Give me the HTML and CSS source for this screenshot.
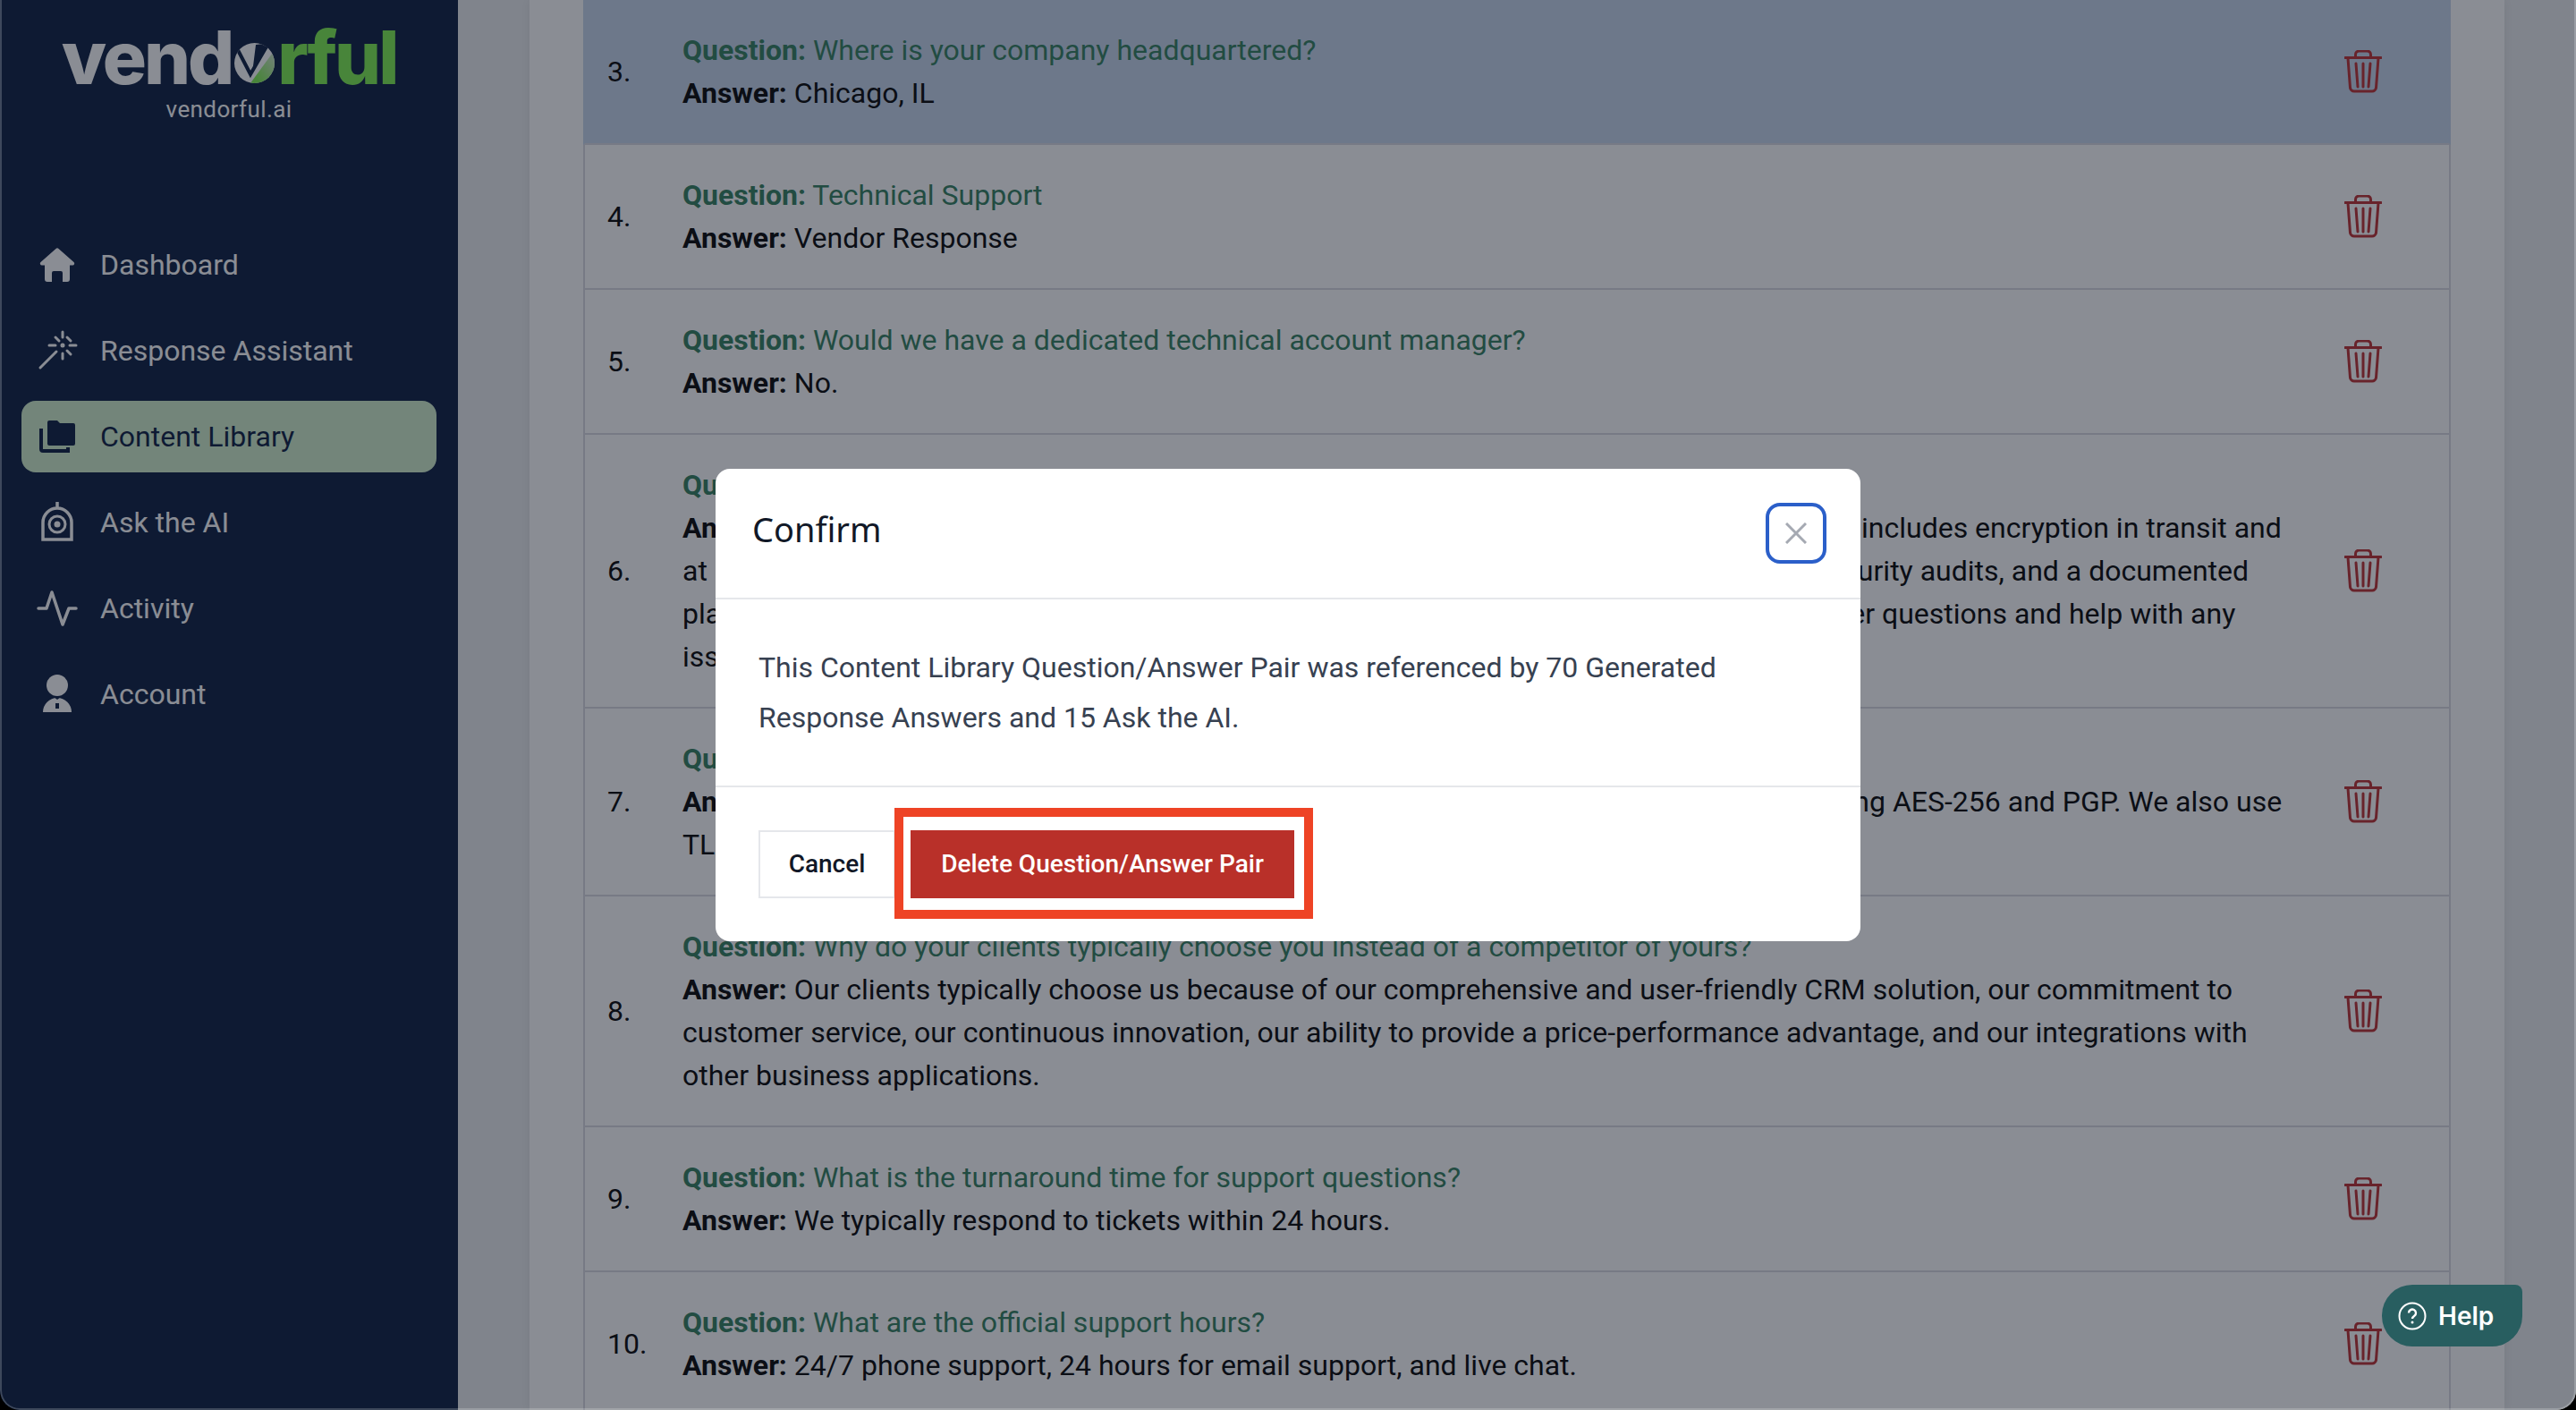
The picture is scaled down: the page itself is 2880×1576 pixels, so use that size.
FILE: index.html
```html
<!DOCTYPE html>
<html lang="en">
<head>
    <meta charset="UTF-8">
    <title>Content Library</title>
    <link rel="stylesheet" href="styles.css">
</head>
<body>
    <div class="window">
        <aside class="sidebar">
            <div class="brand">
                <div class="logo">
                    <span class="logo-grey">vend</span>
                    <svg class="logo-o" viewBox="0 0 45 45">
                        <defs>
                            <linearGradient id="logoFade" x1="0" y1="1" x2="1" y2="0">
                                <stop offset="0.2" stop-color="#7bef4b"/>
                                <stop offset="1" stop-color="#d8e4d4"/>
                            </linearGradient>
                            <clipPath id="logoCircle"><circle cx="22.5" cy="22.5" r="22.5"/></clipPath>
                        </defs>
                        <g clip-path="url(#logoCircle)">
                            <rect width="45" height="45" fill="#fff"/>
                            <polygon points="18,45 45,8 45,45" fill="url(#logoFade)"/>
                            <polyline points="4,8 18,35 36,4" fill="none" stroke="#07193d" stroke-width="4"/>
                            <polygon points="20,34 24,2 40,0" fill="#07193d"/>
                        </g>
                    </svg>
                    <span class="logo-green">rful</span>
                </div>
                <div class="brand-url">vendorful.ai</div>
            </div>
            <nav class="nav">
                <a class="nav-item">
                    <svg class="nav-icon" viewBox="0 0 48 48" fill="currentColor"><path d="M22.5 6a2 2 0 0 1 3 0L42.5 21a2 2 0 0 1-1.5 3.5H38V40a3 3 0 0 1-3 3h-5V33a2 2 0 0 0-2-2h-8a2 2 0 0 0-2 2v10h-5a3 3 0 0 1-3-3V24.5H7a2 2 0 0 1-1.5-3.5Z"/></svg>
                    Dashboard
                </a>
                <a class="nav-item">
                    <svg class="nav-icon" viewBox="0 0 48 48" fill="none" stroke="currentColor" stroke-width="3" stroke-linecap="round"><path d="M5 43 23 25"/><path d="M30 3v6M30 27v6M15 18h7M38 18h7M35 9l4 4M35 24l4 4M22 9l4 4"/><circle cx="30" cy="18" r="1" fill="currentColor"/></svg>
                    Response Assistant
                </a>
                <a class="nav-item active">
                    <svg class="nav-icon" viewBox="0 0 48 48" fill="currentColor"><path d="M15 6h9l3 3h15a2 2 0 0 1 2 2v21a2 2 0 0 1-2 2H15a2 2 0 0 1-2-2V8a2 2 0 0 1 2-2Z"/><path d="M6 15V38a2 2 0 0 0 2 2H36V36" fill="none" stroke="currentColor" stroke-width="4"/></svg>
                    Content Library
                </a>
                <a class="nav-item">
                    <svg class="nav-icon" viewBox="0 0 48 48" fill="none" stroke="currentColor" stroke-width="3.5"><path d="M24 1v7M8 43V24a16 16 0 0 1 32 0V43Z"/><circle cx="24" cy="26" r="9" stroke-width="3"/><circle cx="24" cy="26" r="3.5" fill="currentColor" stroke="none"/></svg>
                    Ask the AI
                </a>
                <a class="nav-item">
                    <svg class="nav-icon" viewBox="0 0 48 48" fill="none" stroke="currentColor" stroke-width="3.5" stroke-linecap="round" stroke-linejoin="round"><path d="M3 24h9l6-18 12 36 7-18h8"/></svg>
                    Activity
                </a>
                <a class="nav-item">
                    <svg class="nav-icon" viewBox="0 0 48 48" fill="currentColor"><circle cx="24" cy="14" r="12"/><path d="M8 44a16 16 0 0 1 32 0Z"/><path d="M22 34h4v6h-4zM20 27h8l-4 3Z" fill="#07193d"/></svg>
                    Account
                </a>
            </nav>
        </aside>

        <main class="main">
            <section class="card">
                <div class="qa-row selected">
                    <span class="qa-num">3.</span>
                    <div class="qa-text">
                        <p class="question"><b>Question:</b> Where is your company headquartered?</p>
                        <p><b>Answer:</b> Chicago, IL</p>
                    </div>
                    <svg class="trash" viewBox="0 0 42 48"><use href="#trashIcon"/></svg>
                </div>
                <div class="qa-row">
                    <span class="qa-num">4.</span>
                    <div class="qa-text">
                        <p class="question"><b>Question:</b> Technical Support</p>
                        <p><b>Answer:</b> Vendor Response</p>
                    </div>
                    <svg class="trash" viewBox="0 0 42 48"><use href="#trashIcon"/></svg>
                </div>
                <div class="qa-row">
                    <span class="qa-num">5.</span>
                    <div class="qa-text">
                        <p class="question"><b>Question:</b> Would we have a dedicated technical account manager?</p>
                        <p><b>Answer:</b> No.</p>
                    </div>
                    <svg class="trash" viewBox="0 0 42 48"><use href="#trashIcon"/></svg>
                </div>
                <div class="qa-row">
                    <span class="qa-num">6.</span>
                    <div class="qa-text">
                        <p class="question"><b>Question:</b> What security measures do you have in place to protect our data?</p>
                        <p><b>Answer:</b> Yes, we take the security of our customer data most seriously. Our security program includes encryption in transit and at rest, full role-based access controls, single sign-on, multi-factor authentication, regular security audits, and a documented plan for incident responses. Your support team is always available to answer any of your other questions and help with any issues.</p>
                    </div>
                    <svg class="trash" viewBox="0 0 42 48"><use href="#trashIcon"/></svg>
                </div>
                <div class="qa-row">
                    <span class="qa-num">7.</span>
                    <div class="qa-text">
                        <p class="question"><b>Question:</b> How is customer data encrypted?</p>
                        <p><b>Answer:</b> Yes. All customer data stored on our platforms is encrypted at rest and in transit using AES-256 and PGP. We also use TLS 1.2 or higher for all data in transit.</p>
                    </div>
                    <svg class="trash" viewBox="0 0 42 48"><use href="#trashIcon"/></svg>
                </div>
                <div class="qa-row">
                    <span class="qa-num">8.</span>
                    <div class="qa-text">
                        <p class="question"><b>Question:</b> Why do your clients typically choose you instead of a competitor of yours?</p>
                        <p><b>Answer:</b> Our clients typically choose us because of our comprehensive and user-friendly CRM solution, our commitment to customer service, our continuous innovation, our ability to provide a price-performance advantage, and our integrations with other business applications.</p>
                    </div>
                    <svg class="trash" viewBox="0 0 42 48"><use href="#trashIcon"/></svg>
                </div>
                <div class="qa-row">
                    <span class="qa-num">9.</span>
                    <div class="qa-text">
                        <p class="question"><b>Question:</b> What is the turnaround time for support questions?</p>
                        <p><b>Answer:</b> We typically respond to tickets within 24 hours.</p>
                    </div>
                    <svg class="trash" viewBox="0 0 42 48"><use href="#trashIcon"/></svg>
                </div>
                <div class="qa-row">
                    <span class="qa-num">10.</span>
                    <div class="qa-text">
                        <p class="question"><b>Question:</b> What are the official support hours?</p>
                        <p><b>Answer:</b> 24/7 phone support, 24 hours for email support, and live chat.</p>
                    </div>
                    <svg class="trash" viewBox="0 0 42 48"><use href="#trashIcon"/></svg>
                </div>
            </section>
        </main>

        <div class="overlay">
            <div class="modal">
                <header class="modal-head">
                    <h3>Confirm</h3>
                    <button class="close-btn" type="button">
                        <svg viewBox="0 0 24 24" fill="none" stroke="#a5a9b2" stroke-width="3"><path d="M1 1l22 22M23 1 1 23"/></svg>
                    </button>
                </header>
                <div class="modal-body">
                    This Content Library Question/Answer Pair was referenced by 70 Generated Response Answers and 15 Ask the AI.
                </div>
                <footer class="modal-foot">
                    <button class="btn btn-cancel" type="button">Cancel</button>
                    <button class="btn btn-delete" type="button">Delete Question/Answer Pair</button>
                    <div class="callout"></div>
                </footer>
            </div>
        </div>

        <button class="help-btn" type="button">
            <svg viewBox="0 0 32 32" fill="none" stroke="#fff" stroke-width="2"><circle cx="16" cy="16" r="14.5"/><path d="M12 12.5a4 4 0 1 1 6.3 3.3c-1.4 1-2.3 1.7-2.3 3.2" stroke-width="2.4"/><circle cx="16" cy="23" r="1.5" fill="#fff" stroke="none"/></svg>
            Help
        </button>
    </div>

    <svg class="defs" width="0" height="0">
        <symbol id="trashIcon" viewBox="0 0 42 48">
            <g fill="none" stroke="#bb2a2c" stroke-width="3" stroke-linecap="round">
                <path d="M1 8.500h40"/>
                <path d="M12.500 8V5a4 4 0 0 1 4-4h9a4 4 0 0 1 4 4v3"/>
                <path d="M4 9l2.500 33a4.500 4.500 0 0 0 4.500 4h20a4.500 4.500 0 0 0 4.500-4L38 9"/>
                <path d="M13 15l2 26M21 15v26M29 15l-2 26"/>
            </g>
        </symbol>
    </svg>
</body>
</html>
```
FILE: styles.css
```css
* {
    box-sizing: border-box;
}

html, body {
    margin: 0;
    padding: 0;
    height: 100%;
    background-color: #000;
}

body {
    font-family: Roboto, "Liberation Sans", sans-serif;
    font-size: 32px;
    overflow: hidden;
}

.defs {
    position: absolute;
}

.window {
    position: relative;
    display: flex;
    height: 1576px;
    overflow: hidden;
    border-radius: 0 0 22px 22px;
}

/* sidebar */
.sidebar {
    flex: 0 0 512px;
    background-color: #07193d;
    color: #fff;
}

.brand {
    height: 256px;
    padding-top: 30px;
    text-align: center;
}

.logo {
    display: flex;
    justify-content: center;
    align-items: baseline;
    height: 70px;
    font-family: Inter, sans-serif;
    font-size: 82px;
    font-weight: 800;
    line-height: 70px;
    letter-spacing: -3px;
}

.logo-grey {
    color: #fff;
}

.logo-green {
    color: #7bef4b;
}

.logo-o {
    width: 45px;
    height: 45px;
    margin: 0 3px 7px 3px;
    align-self: flex-end;
}

.brand-url {
    margin-top: 7px;
    font-size: 26px;
    letter-spacing: 0.4px;
}

.nav {
    display: flex;
    flex-direction: column;
    gap: 16px;
    padding: 0 24px;
}

.nav-item {
    display: flex;
    align-items: center;
    gap: 24px;
    height: 80px;
    padding-left: 16px;
    border-radius: 16px;
}

.nav-item.active {
    background-color: #d1efcb;
    color: #07193d;
}

.nav-icon {
    flex: none;
    width: 48px;
    height: 48px;
}

/* content list */
.main {
    flex: 1;
    height: 1576px;
    overflow: hidden;
    padding-right: 80px;
    padding-left: 80px;
    background-color: #ebedef;
}

.card {
    height: 100%;
    padding: 0 60px;
    background-color: #fff;
    box-shadow: 0 0 12px rgba(0, 0, 0, 0.08);
}

.qa-row {
    display: flex;
    align-items: center;
    padding: 32px 0 32px 25px;
    border-left: 2px solid #d9d9e1;
    border-right: 2px solid #d9d9e1;
    border-bottom: 2px solid #d9d9e1;
    color: #000;
    line-height: 48px;
}

.qa-row.selected {
    background-color: #c5d5eb;
    border-left-color: #c5d5eb;
    border-right-color: #c5d5eb;
}

.qa-num {
    flex: 0 0 84px;
}

.qa-text {
    width: 1800px;
}

.qa-text p {
    margin: 0;
}

.qa-text .question {
    color: #2f7d5b;
}

.trash {
    flex: none;
    width: 42px;
    height: 48px;
    margin-left: auto;
    margin-right: 75px;
}

/* dialog */
.overlay {
    position: absolute;
    top: 0;
    left: 0;
    right: 0;
    bottom: 0;
    display: flex;
    align-items: center;
    justify-content: center;
    padding-top: 2px;
    background-color: rgba(21, 27, 41, 0.5);
    border: 2px solid rgba(255, 255, 255, 0.2);
    border-top: none;
    border-radius: 0 0 22px 22px;
}

.modal {
    width: 1280px;
    height: 528px;
    background-color: #fff;
    border-radius: 16px;
    color: #374151;
}

.modal-head {
    display: flex;
    align-items: center;
    justify-content: space-between;
    height: 146px;
    padding: 0 38px 0 41px;
    border-bottom: 2px solid #e5e7eb;
}

.modal-head h3 {
    margin: 0 0 10px;
    font-family: "Noto Sans", sans-serif;
    font-size: 38px;
    font-weight: 400;
    color: #111827;
}

.close-btn {
    display: flex;
    align-items: center;
    justify-content: center;
    width: 68px;
    height: 68px;
    padding: 0;
    background: #fff;
    border: 4px solid #2b5fc9;
    border-radius: 16px;
}

.close-btn svg {
    width: 24px;
    height: 24px;
}

.modal-body {
    height: 210px;
    padding: 48px;
    border-bottom: 2px solid #e5e7eb;
    line-height: 56px;
}

.modal-foot {
    position: relative;
    display: flex;
    gap: 17px;
    padding: 48px;
}

.btn {
    height: 76px;
    padding: 0 0 2px;
    font-family: Roboto, sans-serif;
    font-size: 28px;
    font-weight: 500;
}

.btn-cancel {
    width: 153px;
    background: #fff;
    border: 2px solid #e5e7eb;
    color: #111827;
}

.btn-delete {
    width: 429px;
    background-color: #b93029;
    border: none;
    color: #fff;
}

.callout {
    position: absolute;
    left: 200px;
    top: 23px;
    width: 468px;
    height: 124px;
    border: 10px solid #ee4325;
}

.help-btn {
    position: absolute;
    left: 2663px;
    top: 1436px;
    display: flex;
    align-items: center;
    gap: 13px;
    width: 157px;
    height: 69px;
    padding: 0 0 0 18px;
    background-color: #285e60;
    border: none;
    border-radius: 34px 8px 34px 34px;
    color: #fff;
    font-family: Inter, sans-serif;
    font-size: 28px;
    font-weight: 600;
}

.help-btn svg {
    width: 32px;
    height: 32px;
}
```
